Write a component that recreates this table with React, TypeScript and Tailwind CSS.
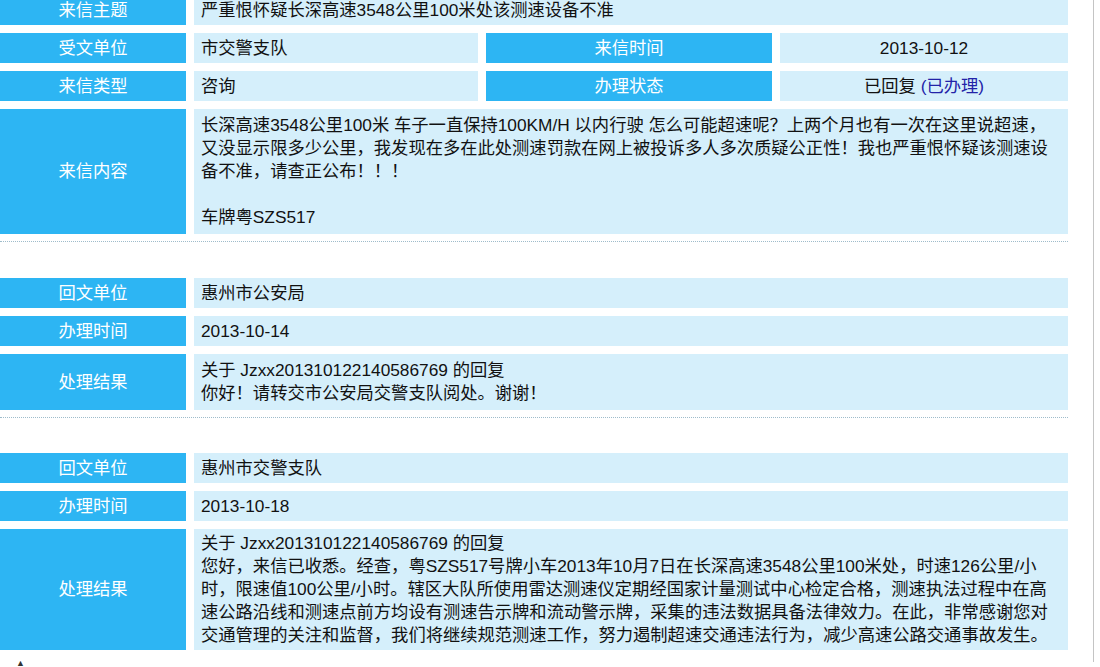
// 信件详情页 — 来信 + 两条回复记录

type Row = {
  label: string
  lines: string[]
  h: string
}

const FONT = 'font-["Liberation_Sans","Noto_Sans_CJK_SC",sans-serif]'

function Label({ text, w = 'w-[186px]' }: { text: string; w?: string }) {
  return (
    <div className={`${w} shrink-0 bg-[#2db5f3] text-white flex items-center justify-center`}>
      {text}
    </div>
  )
}

function Value({ lines }: { lines: string[] }) {
  return (
    <div className="flex-1 bg-[#d5effb] text-[#111] flex flex-col justify-center pl-[7px] whitespace-nowrap">
      {lines.map((l, i) => (
        <div key={i} className="h-[23px]">{l}</div>
      ))}
    </div>
  )
}

function Table({ rows }: { rows: Row[] }) {
  return (
    <div className="flex flex-col gap-2">
      {rows.map((r, i) => (
        <div key={i} className={`flex gap-2 ${r.h}`}>
          <Label text={r.label} />
          <Value lines={r.lines} />
        </div>
      ))}
    </div>
  )
}

function Divider() {
  return <div className="mt-[7px] border-t border-dotted border-[#9fbccb]" />
}

const REPLY_TITLE = '关于 Jzxx201310122140586769 的回复'

export default function App() {
  return (
    <div className={`w-[1100px] h-[667px] overflow-hidden bg-white ${FONT} text-[17.3px] leading-[23px]`}>
      <div className="w-[1094px] h-full border-r border-[#c4c4c4]">
        <div className="w-[1068px]">
          {/* 来信 */}
          <div className="flex flex-col gap-2 -mt-[5px]">
            <div className="flex gap-2 h-[30px]">
              <Label text="来信主题" />
              <Value lines={['严重恨怀疑长深高速3548公里100米处该测速设备不准']} />
            </div>
            <div className="flex gap-2 h-[30px]">
              <Label text="受文单位" />
              <div className="w-[284px] shrink-0 bg-[#d5effb] text-[#111] flex items-center pl-[7px]">市交警支队</div>
              <Label text="来信时间" w="w-[286px]" />
              <div className="flex-1 bg-[#d5effb] text-[#111] flex items-center justify-center">2013-10-12</div>
            </div>
            <div className="flex gap-2 h-[30px]">
              <Label text="来信类型" />
              <div className="w-[284px] shrink-0 bg-[#d5effb] text-[#111] flex items-center pl-[7px]">咨询</div>
              <Label text="办理状态" w="w-[286px]" />
              <div className="flex-1 bg-[#d5effb] text-[#111] flex items-center justify-center">
                已回复 <span className="ml-[5px] text-[#2323a8]">(已办理)</span>
              </div>
            </div>
            <div className="flex gap-2 h-[125px]">
              <Label text="来信内容" />
              <Value
                lines={[
                  '长深高速3548公里100米 车子一直保持100KM/H 以内行驶 怎么可能超速呢？上两个月也有一次在这里说超速，',
                  '又没显示限多少公里，我发现在多在此处测速罚款在网上被投诉多人多次质疑公正性！我也严重恨怀疑该测速设',
                  '备不准，请查正公布！！！',
                  '',
                  '车牌粤SZS517',
                ]}
              />
            </div>
          </div>
          <Divider />

          {/* 回复 1 */}
          <div className="mt-[36px]">
            <Table
              rows={[
                { label: '回文单位', lines: ['惠州市公安局'], h: 'h-[30px]' },
                { label: '办理时间', lines: ['2013-10-14'], h: 'h-[30px]' },
                {
                  label: '处理结果',
                  lines: [REPLY_TITLE, '你好！请转交市公安局交警支队阅处。谢谢！'],
                  h: 'h-[56px]',
                },
              ]}
            />
          </div>
          <Divider />

          {/* 回复 2 */}
          <div className="mt-[35px]">
            <Table
              rows={[
                { label: '回文单位', lines: ['惠州市交警支队'], h: 'h-[30px]' },
                { label: '办理时间', lines: ['2013-10-18'], h: 'h-[30px]' },
                {
                  label: '处理结果',
                  lines: [
                    REPLY_TITLE,
                    '您好，来信已收悉。经查，粤SZS517号牌小车2013年10月7日在长深高速3548公里100米处，时速126公里/小',
                    '时，限速值100公里/小时。辖区大队所使用雷达测速仪定期经国家计量测试中心检定合格，测速执法过程中在高',
                    '速公路沿线和测速点前方均设有测速告示牌和流动警示牌，采集的违法数据具备法律效力。在此，非常感谢您对',
                    '交通管理的关注和监督，我们将继续规范测速工作，努力遏制超速交通违法行为，减少高速公路交通事故发生。',
                  ],
                  h: 'h-[121px]',
                },
              ]}
            />
          </div>
          <div className="pl-[16px] pt-[9px] text-[9px] leading-none text-[#333]">▲</div>
        </div>
      </div>
    </div>
  )
}
